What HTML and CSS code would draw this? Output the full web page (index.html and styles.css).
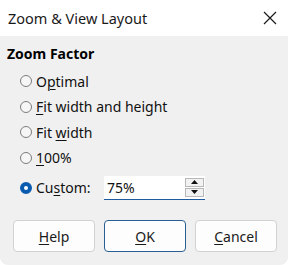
FILE: index.html
```html
<!DOCTYPE html>
<html>
<head>
<meta charset="utf-8">
<link rel="stylesheet" href="styles.css">
</head>
<body>
<div class="window">
  <div class="titlebar">
    <span class="title">Zoom &amp; View Layout</span>
    <svg class="close" width="14" height="14" viewBox="0 0 14 14"><path d="M1 1 L13 13 M13 1 L1 13" stroke="#1a1a1a" stroke-width="1.2" fill="none"/></svg>
  </div>
  <div class="content">
    <div class="heading">Zoom Factor</div>
    <div class="options">
      <label class="opt"><span class="radio"></span><span>O<u>p</u>timal</span></label>
      <label class="opt"><span class="radio"></span><span><u>F</u>it width and height</span></label>
      <label class="opt"><span class="radio"></span><span>Fit <u>w</u>idth</span></label>
      <label class="opt"><span class="radio"></span><span><u>1</u>00%</span></label>
      <div class="opt custom"><span class="radio checked"></span><span class="clabel">Cu<u>s</u>tom:</span>
        <div class="spin">
          <span class="val">75%</span>
          <div class="spinbtns">
            <span class="sb"><svg width="9" height="5" viewBox="0 0 9 5"><path d="M4.5 0 L9 5 L0 5 Z" fill="#111"/></svg></span>
            <span class="sb"><svg width="9" height="5" viewBox="0 0 9 5"><path d="M0 0 L9 0 L4.5 5 Z" fill="#111"/></svg></span>
          </div>
        </div>
      </div>
    </div>
    <div class="buttons">
      <button class="btn"><u>H</u>elp</button>
      <button class="btn default"><u>O</u>K</button>
      <button class="btn"><u>C</u>ancel</button>
    </div>
  </div>
</div>
</body>
</html>
```
FILE: styles.css
```css
html, body { margin: 0; padding: 0; background: #ffffff; }
body { font-family: "Noto Sans", "Open Sans", sans-serif; color: #000; width: 288px; height: 265px; overflow: hidden; }
.window { width: 288px; height: 265px; background: #f0f0f0; border-radius: 0 0 8px 8px; overflow: hidden; display: flex; flex-direction: column; }
.titlebar { height: 36px; background: #ffffff; display: flex; align-items: center; justify-content: space-between; padding: 0 11px 0 8px; }
.title { font-size: 14.5px; color: #1a1a1a; margin-top: -1px; }
.close { display: block; margin-top: -1px; }
.content { padding: 8px 11px 0 7px; }
.heading { font-size: 14px; font-weight: 700; line-height: 20px; }
.options { display: flex; flex-direction: column; padding-left: 13px; margin-top: 4.5px; }
.opt { display: flex; align-items: center; height: 25.5px; font-size: 14px; gap: 4px; color: #111; }
.opt u { text-underline-offset: 2px; text-decoration-thickness: 1px; }
.radio { width: 10px; height: 10px; border: 1px solid #7d7d7d; border-radius: 50%; background: #f6f6f6; box-sizing: content-box; flex: none; }
.radio.checked { width: 4px; height: 4px; border: 4px solid #0a5bb0; background: #fff; }
.custom { height: 30px; margin-top: 2px; }
.clabel { width: 64px; }
.spin { width: 101px; height: 24px; background: #fff; border-bottom: 1px solid #1c5c9e; box-sizing: border-box; display: flex; align-items: center; justify-content: space-between; padding: 0 1px 0 3px; }
.val { font-size: 14px; }
.spinbtns { display: flex; flex-direction: column; gap: 1px; }
.sb { width: 19px; height: 9px; border: 1px solid #b8b8b8; background: #f2f2f2; display: flex; align-items: center; justify-content: center; box-sizing: border-box; }
.sb svg { display: block; width: 7px; height: 4px; }
.buttons { display: flex; gap: 9px; padding-left: 6px; margin-top: 17.5px; }
.btn { width: 82px; height: 32px; font-family: inherit; font-size: 14px; background: #fdfdfd; border: 1px solid #d2d2d2; border-radius: 4px; color: #1a1a1a; padding: 0; }
.btn.default { border-color: #2a5f93; }
.btn u { text-underline-offset: 2px; text-decoration-thickness: 1px; }
```
